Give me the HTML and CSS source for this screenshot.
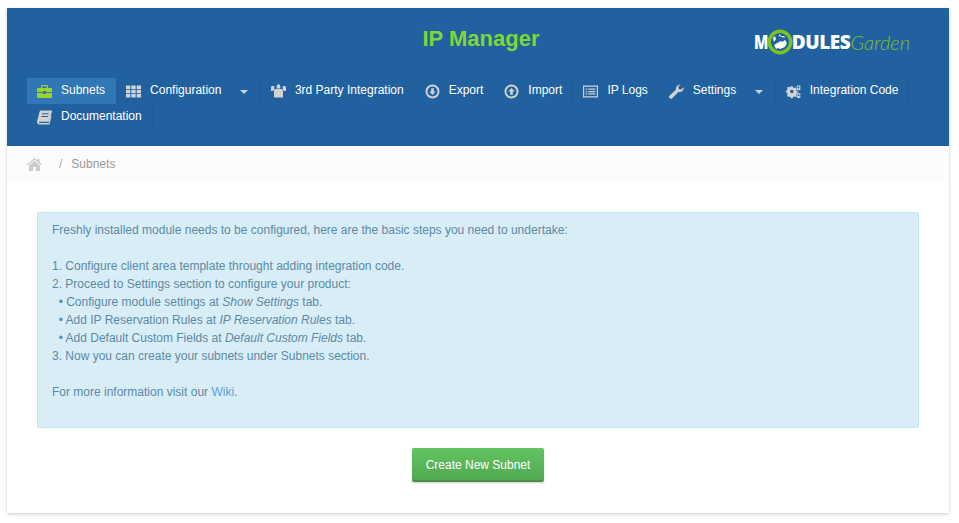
FILE: index.html
```html
<!DOCTYPE html>
<html lang="en">
<head>
<meta charset="utf-8">
<title>IP Manager</title>
<link rel="stylesheet" href="styles.css">
</head>
<body>
<div class="panel">
  <header class="header">
    <div class="top">
      <h1 class="title">IP Manager</h1>
      <div class="logo">
        <span class="logo-bold logo-m">M</span>
        <svg class="logo-ring" viewBox="0 0 26 26" width="26" height="26" aria-hidden="true">
          <circle cx="13" cy="13" r="10.7" fill="#21619f" stroke="#7cc31c" stroke-width="3.400"/>
          <path d="M7 16l5-3 2-1 1 1 3-2 2 3-2 4-5 2-2-1-2 1zM12 5l2 2 3 0 1 2-3-1-3-1zM6 9l2-2 1 3-2 3z" fill="#fff"/>
        </svg>
        <span class="logo-bold">DULES</span><span class="logo-thin">Garden</span>
      </div>
    </div>
    <nav class="nav">
      <a class="item active">
        <svg class="ico" viewBox="0 0 15 13"><path class="g" d="M5 0h5a1 1 0 0 1 1 1v2h3a1 1 0 0 1 1 1v3H9V6H6v1H0V4a1 1 0 0 1 1-1h3V1a1 1 0 0 1 1-1zm.3 1.300V3h4.400V1.300zM0 8h6v1h3V8h6v4a1 1 0 0 1-1 1H1a1 1 0 0 1-1-1z"/></svg>
        <span>Subnets</span></a>
      <a class="item">
        <svg class="ico" viewBox="0 0 15 12"><path d="M0 0h4.300v3.400H0zM5.300 0h4.400v3.400H5.300zM10.700 0H15v3.400h-4.300zM0 4.300h4.300v3.400H0zM5.300 4.300h4.400v3.400H5.300zM10.700 4.300H15v3.400h-4.300zM0 8.600h4.300V12H0zM5.300 8.600h4.400V12H5.300zM10.700 8.600H15V12h-4.300z"/></svg>
        <span>Configuration</span><span class="caret"></span></a>
      <a class="item">
        <svg class="ico" viewBox="0 0 15 12"><path d="M4 3.500h7l1 1V12H3V4.500zM5.700 0.500a1.800 1.800 0 0 1 3.600 0v2.500H5.700zM1 0.500h2.200v3.200L2 5.500H0V1.500zM14 0.500h-2.200v3.200l1.200 1.800h2V1.500z"/></svg>
        <span>3rd Party Integration</span></a>
      <a class="item">
        <svg class="ico" viewBox="0 0 15 15"><path fill-rule="evenodd" d="M7.500 .5a7 7 0 1 1 0 14 7 7 0 0 1 0-14zm0 1.900a5.100 5.100 0 1 0 0 10.200 5.100 5.100 0 0 0 0-10.200z"/><path d="M6.200 4.200h2.600v3.300h2L7.500 11 4.200 7.500h2z"/></svg>
        <span>Export</span></a>
      <a class="item">
        <svg class="ico" viewBox="0 0 15 15"><path fill-rule="evenodd" d="M7.500 .5a7 7 0 1 1 0 14 7 7 0 0 1 0-14zm0 1.900a5.100 5.100 0 1 0 0 10.200 5.100 5.100 0 0 0 0-10.200z"/><path d="M6.200 10.800h2.600V7.500h2L7.500 4 4.200 7.500h2z"/></svg>
        <span>Import</span></a>
      <a class="item">
        <svg class="ico" viewBox="0 0 15 12"><path fill-rule="evenodd" d="M0 0h15v12H0zm1.200 1.200v9.600h12.600V1.200z"/><path d="M2.700 3h1.600v1.300H2.700zM5.300 3h7v1.300h-7zM2.700 5.400h1.600v1.300H2.700zM5.300 5.400h7v1.300h-7zM2.700 7.800h1.600v1.300H2.700zM5.300 7.800h7v1.300h-7z"/></svg>
        <span>IP Logs</span></a>
      <a class="item">
        <svg class="ico" viewBox="0 0 15 15"><path d="M14.700 3.300c.4 2-.9 4.500-3.600 4.700-.6 0-1.100-.1-1.500-.2L3.500 14.100a1.900 1.900 0 0 1-2.900-2.500L6.900 5.700C6.300 3.200 8.300.2 11.600.4l-2.300 2.400.5 2.300 2.300.5z"/></svg>
        <span>Settings</span><span class="caret"></span></a>
      <a class="item">
        <svg class="ico" viewBox="0 0 15.500 13"><path fill-rule="evenodd" d="M4.500 2h2l.3 1.300 1.300.6 1.200-.7 1.300 1.400-.7 1.100.5 1.300 1.300.4v1.900l-1.300.3-.5 1.300.7 1.100-1.300 1.300-1.200-.7-1.300.5-.3 1.300h-2l-.3-1.300-1.300-.5-1.100.7L.5 11.300l.7-1.100-.5-1.300L-.5 8.600V6.700l1.200-.4.500-1.300-.7-1.100L1.800 2.500l1.100.7 1.300-.6zm1 3.800a1.800 1.800 0 1 0 0 3.600 1.800 1.800 0 0 0 0-3.600z" transform="translate(.5 -1)"/><path fill-rule="evenodd" d="M13 0l.8.400.8-.1.600 1.400-.6.600v.9l.5.600-.6 1.300-.8-.1-.7.500-.8-.5-.8.100-.6-1.300.5-.6v-.9l-.5-.6.600-1.300.8.100zm-.1 1.300a1 1 0 1 0 0 2 1 1 0 0 0 0-2zM13 8l.8.400.8-.1.600 1.400-.6.600v.9l.5.600-.6 1.300-.8-.1-.7.500-.8-.5-.8.100-.6-1.300.5-.6v-.9l-.5-.6.600-1.300.8.100zm-.1 1.300a1 1 0 1 0 0 2 1 1 0 0 0 0-2z"/></svg>
        <span>Integration Code</span></a>
      <a class="item">
        <svg class="ico" viewBox="0 0 15 14"><path d="M4 0h10.400c.5 0 .7.400.6.800l-2.400 9.400c-.2.700-.7 1-1.300 1H2.700c-.7 0-.9.400-.8.700.1.400.5.600 1 .6h9l1.800-7 .9.500-2.200 8H2.600C1 14 0 13 0 11.500c0-.4 0-.7.100-1L2.600 1.200C2.800.4 3.300 0 4 0zm1.200 2.800l-.3 1h6.600l.3-1zM4.500 5.400l-.3 1h6.600l.3-1z" fill-rule="evenodd"/></svg>
        <span>Documentation</span></a>
    </nav>
  </header>
  <div class="crumbs">
    <svg class="home" viewBox="0 0 15 13"><path d="M7.500 0l3 2.600V1h2v3.300L15 6.500l-.8.900-6.700-5.600L.8 7.400 0 6.500zM7.500 3l5.500 4.600V13H9V9H6v4H2V7.600z"/></svg>
    <span class="sep">/</span>
    <span>Subnets</span>
  </div>
  <main class="content">
    <div class="alert">
      Freshly installed module needs to be configured, here are the basic steps you need to undertake:<br>
      <br>
      1. Configure client area template throught adding integration code.<br>
      2. Proceed to Settings section to configure your product:<br>
      &nbsp;&nbsp;• Configure module settings at <em>Show Settings</em> tab.<br>
      &nbsp;&nbsp;• Add IP Reservation Rules at <em>IP Reservation Rules</em> tab.<br>
      &nbsp;&nbsp;• Add Default Custom Fields at <em>Default Custom Fields</em> tab.<br>
      3. Now you can create your subnets under Subnets section.<br>
      <br>
      For more information visit our <a class="link">Wiki</a>.<br>
      <br>
    </div>
    <div class="actions">
      <button class="btn" type="button">Create New Subnet</button>
    </div>
  </main>
</div>
</body>
</html>
```
FILE: styles.css
```css
* { box-sizing: border-box; }
html, body { margin: 0; padding: 0; }
body {
  background: #fff;
  font-family: "Liberation Sans", Arial, sans-serif;
  font-size: 12px;
  line-height: 18px;
  color: #31708f;
  padding: 8px 10px 10px 7px;
  height: 523px;
  overflow: hidden;
}
.panel {
  height: 505px;
  background: #fff;
  box-shadow: 0 1px 3px rgba(0, 0, 0, .22);
}
.header {
  background: #21619f;
  padding: 0 20px 16px;
  height: 138px;
}
.top {
  display: grid;
  grid-template-columns: 1fr auto 1fr;
  align-items: start;
  height: 60px;
  border-bottom: 1px solid #1f5c98;
}
.title {
  grid-column: 2;
  margin: 17px 0 0 6px;
  font-size: 22px;
  line-height: 28px;
  font-weight: 700;
  color: #7ed63a;
}
.logo {
  grid-column: 3;
  justify-self: end;
  display: flex;
  align-items: center;
  height: 26px;
  margin: 21px 19px 0 0;
  font-family: "Open Sans", sans-serif;
  line-height: 26px;
}
.logo-bold {
  color: #fff;
  font-size: 19px;
  font-weight: 800;
  letter-spacing: -.4px;
}
.logo-m {
  display: inline-block;
  transform: scaleX(.78);
  transform-origin: right center;
}
.logo-ring { flex: none; margin: 0 -1px 0 -1px; }
.logo-thin {
  color: #7cc31c;
  font-family: "Lato", sans-serif;
  font-size: 20px;
  font-weight: 300;
  font-style: italic;
}
.nav {
  display: flex;
  flex-wrap: wrap;
  margin-top: 10px;
}
.item {
  display: flex;
  align-items: center;
  height: 26px;
  padding: 0 10px 2px;
  color: #fff;
  border-right: 1px solid #1f5c98;
}
.item.active {
  background: #3176b5;
  border-right-color: transparent;
}
.ico {
  flex: none;
  width: 15px;
  height: 15px;
  margin: 2px 9px 0 0;
  fill: #d2d2d2;
}
.item .g { fill: #9bd32a; }
.caret {
  width: 0;
  height: 0;
  margin: 4px 2px 0 18.500px;
  border-top: 4px solid #c8d2dc;
  border-left: 4px solid transparent;
  border-right: 4px solid transparent;
}
.crumbs {
  display: flex;
  align-items: center;
  height: 36px;
  padding-left: 20px;
  background: #fdfbfc;
  color: #999;
}
.home {
  width: 15px;
  height: 13px;
  fill: #ccc;
  margin-top: 1px;
}
.sep {
  margin: 0 9px 0 17px;
  color: #aaa;
}
.content { padding: 30px 30px 0; }
.alert {
  padding: 8px 14px;
  background: #d9edf7;
  border: 1px solid #bce8f1;
  border-radius: 2px;
  color: #5b8aa5;
}
.link { color: #5c9fdc; }
.actions {
  display: flex;
  justify-content: center;
  margin-top: 20px;
}
.btn {
  width: 132px;
  height: 34px;
  padding: 2px 0 0;
  border: 0;
  border-bottom: 2px solid #4a8f4a;
  border-radius: 2px;
  background: linear-gradient(#62c462, #51a951);
  box-shadow: 0 1px 2px rgba(0, 0, 0, .2);
  color: #fff;
  font: 12px/18px "Liberation Sans", Arial, sans-serif;
}
```
